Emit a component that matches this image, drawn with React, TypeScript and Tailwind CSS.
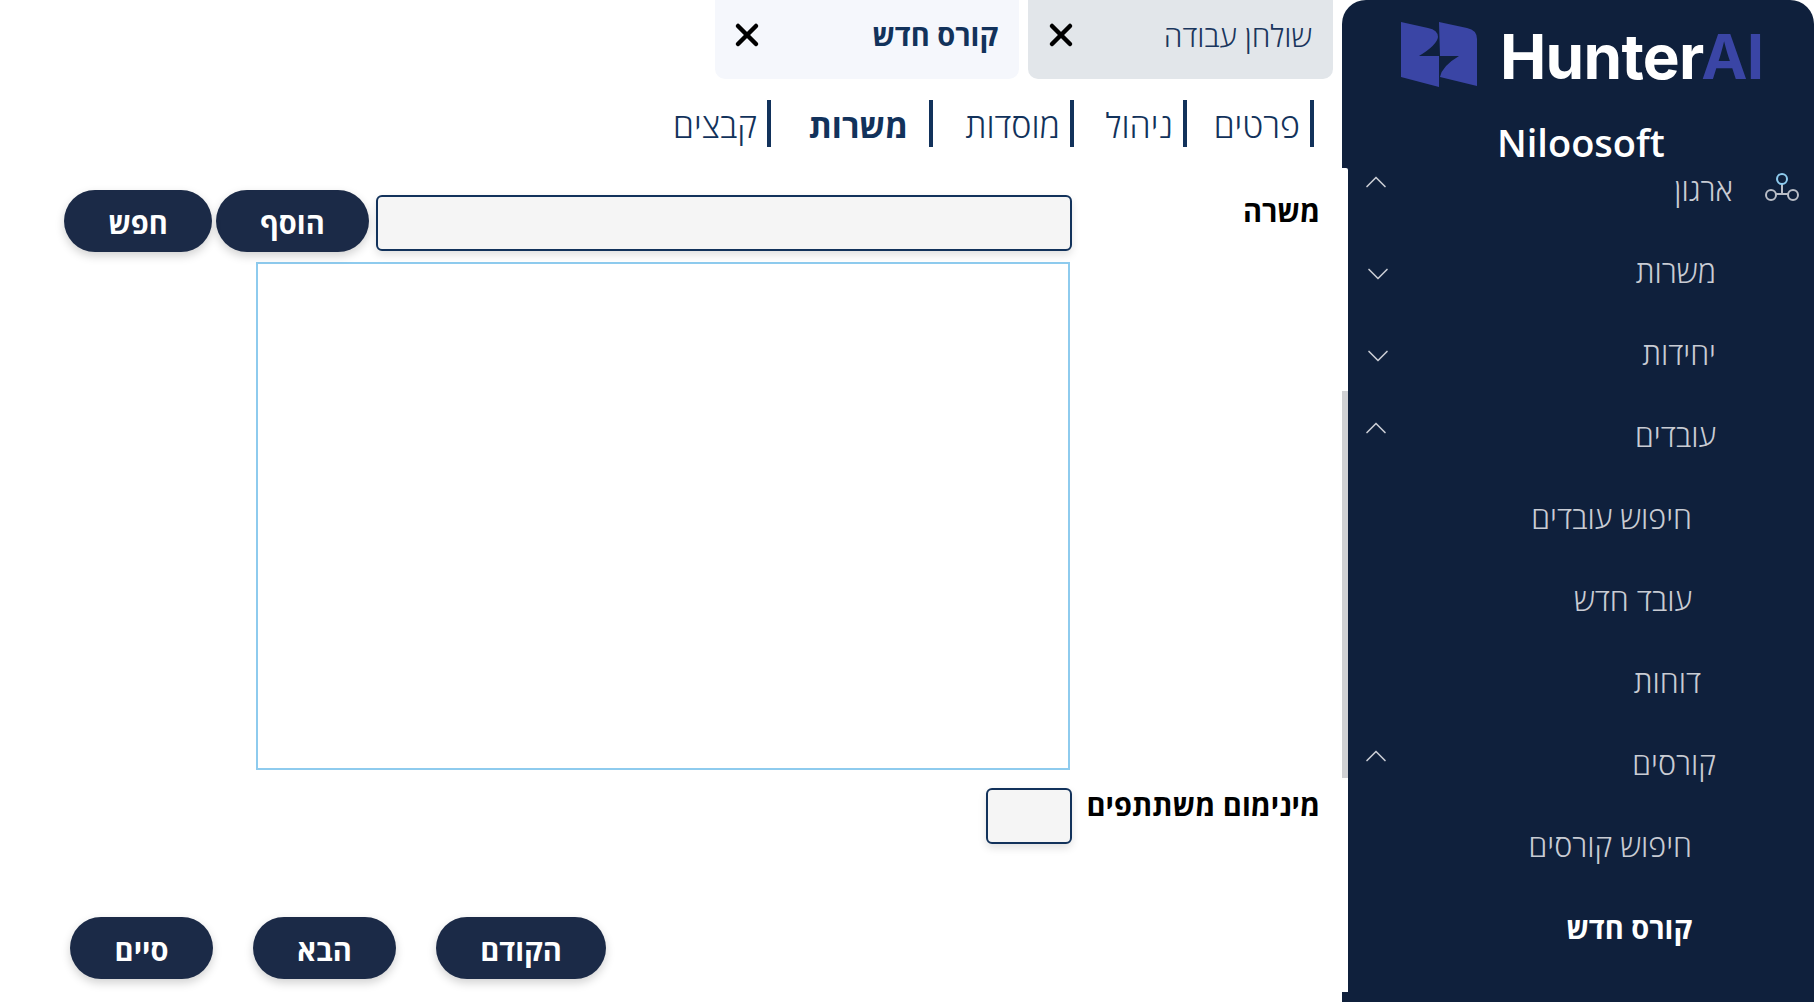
import { ChevronDown, ChevronUp, X } from "lucide-react";

const menu = [
  { label: "ארגון", chevron: "up", pr: 81 },
  { label: "משרות", chevron: "down", pr: 98 },
  { label: "יחידות", chevron: "down", pr: 98 },
  { label: "עובדים", chevron: "up", pr: 98 },
  { label: "חיפוש עובדים", pr: 122 },
  { label: "עובד חדש", pr: 122 },
  { label: "דוחות", pr: 113 },
  { label: "קורסים", chevron: "up", pr: 98 },
  { label: "חיפוש קורסים", pr: 122 },
  { label: "קורס חדש", pr: 122, active: true },
];

const subTabs = [
  { label: "פרטים", width: "w-[127px]" },
  { label: "ניהול", width: "w-[113px]" },
  { label: "מוסדות", width: "w-[141px]" },
  { label: "משרות", width: "w-[162px]", active: true },
  { label: "קבצים", width: "w-[130px]" },
];

function Logo() {
  return (
    <svg width="78" height="70" viewBox="0 0 78 70" className="shrink-0">
      <path
        d="M1 2 L28 8 Q38 10 38 17 Q37 25 19 36 L39 36 L39 67 L1 57 Z"
        fill="#3a45a5"
      />
      <path
        d="M39 2 L67 8 Q77 10 77 19 L77 66 L40 57 Q42 46 59 36 L40 36 Z"
        fill="#3a45a5"
      />
    </svg>
  );
}

function OrgIcon() {
  return (
    <svg width="36" height="30" viewBox="0 0 36 30" fill="none" strokeWidth="2">
      <path d="M18 11 V21 M11 21 H25" stroke="#b9bdc6" />
      <circle cx="18" cy="6" r="5" stroke="#8ecbee" />
      <circle cx="7" cy="22" r="5" stroke="#b9bdc6" />
      <circle cx="29" cy="22" r="5" stroke="#b9bdc6" />
    </svg>
  );
}

function PillButton({ label, width }: { label: string; width: string }) {
  return (
    <button
      className={`h-[62px] ${width} shrink-0 rounded-[31px] bg-[#1b2a47] pt-[3px] text-[29px] font-bold text-white shadow-[0_4px_10px_rgba(0,0,0,0.18)]`}
    >
      {label}
    </button>
  );
}

export default function App() {
  return (
    <div
      dir="rtl"
      className="flex h-[1002px] w-[1814px] overflow-hidden bg-white font-['Open_Sans','Liberation_Sans',sans-serif]"
    >
      {/* Sidebar */}
      <aside className="relative h-full w-[472px] shrink-0 rounded-t-[24px] bg-[#0f203c]">
        <div dir="ltr" className="flex h-[104px] items-start pl-[58px] pt-[20px]">
          <Logo />
          <span className="ml-[22px] mt-[-1px] font-['Inter',sans-serif] text-[62px] font-bold leading-[75px] tracking-[-0.7px] text-white">
            Hunter<span className="text-[#3a45a5]">AI</span>
          </span>
        </div>
        <div
          dir="ltr"
          className="h-[44px] pl-[155px] text-[38px] font-semibold leading-[76px] text-white"
        >
          Niloosoft
        </div>
        <ul className="w-full">
          {menu.map((item) => (
            <li key={item.label} className="relative flex h-[82px] items-center pt-[2px]">
              {item.label === "ארגון" && (
                <span className="absolute right-[14px] top-[25px]">
                  <OrgIcon />
                </span>
              )}
              <span
                className={`pr-(--pr) ${
                  item.active
                    ? "text-[29px] font-bold text-white"
                    : "text-[30.5px] font-light text-[#c9ccd4]"
                }`}
                style={{ "--pr": `${item.pr}px` } as React.CSSProperties}
              >
                {item.label}
              </span>
              {item.chevron === "up" && (
                <ChevronUp
                  className="absolute left-[16px] top-[16px] text-[#c9ccd4]"
                  size={36}
                  strokeWidth={1.1}
                />
              )}
              {item.chevron === "down" && (
                <ChevronDown
                  className="absolute left-[18px] top-[26px] text-[#c9ccd4]"
                  size={36}
                  strokeWidth={1.1}
                />
              )}
            </li>
          ))}
        </ul>
        {/* edge of the white panel with its scrollbar */}
        <div className="absolute bottom-[10px] left-0 top-[168px] w-[6px] rounded-tr-[2px] bg-white">
          <div className="absolute left-0 top-[223px] h-[387px] w-[6px] bg-[#cfd0d3]" />
        </div>
      </aside>

      {/* Main */}
      <main className="flex-1">
        <div className="flex gap-[9px] pr-[9px]">
          <div className="flex h-[79px] w-[305px] items-center justify-between rounded-b-[10px] bg-[#e2e6ea] pb-[9px] pl-[15px] pr-[21px]">
            <span className="text-[30px] font-light text-[#1a365d]">שולחן עבודה</span>
            <X size={36} strokeWidth={3} className="text-black" />
          </div>
          <div className="flex h-[79px] w-[304px] items-center justify-between rounded-b-[10px] bg-[#f5f7fc] pb-[9px] pl-[14px] pr-[21px]">
            <span className="text-[29px] font-bold text-[#12325b]">קורס חדש</span>
            <X size={36} strokeWidth={3} className="text-black" />
          </div>
        </div>

        <div className="mt-[21px] flex pr-[28px]">
          {subTabs.map((tab) => (
            <div
              key={tab.label}
              className={`flex h-[47px] ${tab.width} items-center border-r-[4px] border-[#12325b] pt-[4px] text-[#12325b] ${
                tab.active
                  ? "pr-[21px] text-[33px] font-bold"
                  : "pr-[10px] text-[34px] font-light"
              }`}
            >
              {tab.label}
            </div>
          ))}
        </div>

        <div className="mt-[43px] pr-[23px]">
          <div className="flex items-center">
            <label className="-mr-px mb-[20px] w-[248px] text-[29px] font-bold leading-[34px] text-black">משרה</label>
            <input className="mt-[4px] h-[56px] w-[696px] rounded-[6px] border-2 border-[#12325b] bg-[#f5f5f5] shadow-[0_4px_8px_rgba(0,0,0,0.12)]" />
            <div className="mr-[7px] flex gap-[4px]">
              <PillButton label="הוסף" width="w-[153px]" />
              <PillButton label="חפש" width="w-[148px]" />
            </div>
          </div>
          <div className="mr-[249px] mt-[10px] h-[508px] w-[814px] border-2 border-[#8ecbee]" />
          <div className="mt-[18px] flex items-start">
            <label className="-mr-px w-[248px] text-[29px] font-bold leading-[34px] text-black">
              מינימום משתתפים
            </label>
            <input className="h-[56px] w-[86px] rounded-[6px] border-2 border-[#12325b] bg-[#f5f5f5] shadow-[0_4px_8px_rgba(0,0,0,0.12)]" />
          </div>
        </div>

        <div className="mt-[73px] flex justify-end gap-[40px] pl-[70px]">
          <PillButton label="הקודם" width="w-[170px]" />
          <PillButton label="הבא" width="w-[143px]" />
          <PillButton label="סיים" width="w-[143px]" />
        </div>
      </main>
    </div>
  );
}
